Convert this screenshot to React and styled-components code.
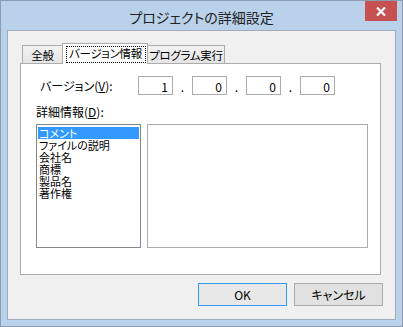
import React from 'react';
import styled, { createGlobalStyle } from 'styled-components';

const GlobalStyle = createGlobalStyle`
  html, body {
    margin: 0;
    padding: 0;
    background: #b9d1ea;
  }
  * {
    box-sizing: border-box;
  }
`;

const Window = styled.div`
  width: 403px;
  height: 327px;
  display: flex;
  flex-direction: column;
  background: #b9d1ea;
  border: 1px solid #8a9db2;
  font-family: 'Noto Sans CJK JP', 'Noto Sans', sans-serif;
  font-feature-settings: 'palt';
  color: #000;
`;

const TitleBar = styled.div`
  height: 29px;
  display: grid;
  grid-template-columns: 1fr auto 1fr;
`;

const Title = styled.div`
  grid-column: 2;
  align-self: center;
  padding-top: 2px;
  font-size: 14px;
  line-height: 16px;
  color: #222;
  white-space: nowrap;
`;

const CloseButton = styled.button`
  grid-column: 3;
  justify-self: end;
  align-self: start;
  width: 32px;
  height: 20px;
  margin-right: 5px;
  padding: 0;
  border: none;
  background: #c75050;
  display: flex;
  align-items: center;
  justify-content: center;
`;

const Client = styled.div`
  flex: 1;
  margin: 0 6px 6px;
  border: 1px solid #a2adb9;
  background: #f0f0f0;
  padding: 12px 12px 13px 12px;
  display: flex;
  flex-direction: column;
`;

const TabStrip = styled.div`
  height: 20px;
  display: flex;
  align-items: flex-end;
  padding-left: 2px;
  margin-right: 2px;
`;

const Tab = styled.div`
  position: relative;
  height: ${({ $active }) => ($active ? '21px' : '18px')};
  width: ${({ $w }) => $w}px;
  flex-shrink: 0;
  margin-left: ${({ $first }) => ($first ? '0' : '-1px')};
  margin-bottom: ${({ $active }) => ($active ? '-1px' : '0')};
  z-index: ${({ $active }) => ($active ? 2 : 1)};
  border: 1px solid #acacac;
  border-bottom: none;
  background: ${({ $active }) =>
    $active ? '#fff' : 'linear-gradient(#f2f2f2, #e5e5e5)'};
  font-size: 11.5px;
  letter-spacing: -0.3px;
  line-height: 14px;
  white-space: nowrap;
  display: flex;
  align-items: flex-start;
  justify-content: center;
  padding-top: 2px;
`;

const FocusLabel = styled.span`
  display: block;
  height: 17px;
  line-height: 15px;
  width: 80px;
  margin-left: 1px;
  text-align: center;
  outline: 1px dotted #000;
  outline-offset: -1px;
`;

const Panel = styled.div`
  flex: 1;
  margin-right: 2px;
  background: #fff;
  border: 1px solid #acacac;
  padding: 12px 12px 0 15px;
  display: flex;
  flex-direction: column;
`;

const VersionRow = styled.div`
  display: flex;
  align-items: center;
  height: 19px;
`;

const VersionLabel = styled.label`
  width: 102px;
  padding-left: 4px;
  font-size: 12px;
  line-height: 14px;
  padding-top: 1px;
  white-space: nowrap;
`;

const NumberBox = styled.div`
  width: 35px;
  height: 19px;
  border: 1px solid #acacac;
  background: #fff;
  font-size: 12px;
  line-height: 17px;
  text-align: right;
  padding-right: 4px;
  padding-top: 1px;
`;

const Dot = styled.span`
  width: 19px;
  text-align: center;
  font-size: 12px;
  line-height: 17px;
  padding-top: 2px;
`;

const DetailLabel = styled.div`
  margin-top: 11px;
  font-size: 12px;
  line-height: 12px;
  height: 12px;
  white-space: nowrap;
`;

const Lists = styled.div`
  margin-top: 6px;
  display: flex;
  gap: 6px;
  height: 124px;
`;

const ListBox = styled.div`
  width: 105px;
  border: 1px solid #828790;
  background: #fff;
  padding: 2px 1px;
`;

const ListItem = styled.div`
  line-height: 12px;
  font-size: 11px;
  padding-left: 1px;
  white-space: nowrap;
  background: ${({ $selected }) => ($selected ? '#3399ff' : 'transparent')};
  color: ${({ $selected }) => ($selected ? '#fff' : '#000')};
`;

const ValueBox = styled.div`
  width: 221px;
  border: 1px solid #acacac;
  background: #fff;
`;

const ButtonRow = styled.div`
  margin-top: 8px;
  display: flex;
  justify-content: flex-end;
  gap: 7px;
`;

const Button = styled.button`
  width: 89px;
  height: 23px;
  padding: 0;
  font-family: inherit;
  font-feature-settings: 'palt';
  font-size: 12px;
  color: #000;
  border: 1px solid ${({ $default }) => ($default ? '#3399ff' : '#adadad')};
  background: ${({ $default }) => ($default ? '#e8e8e8' : '#e1e1e1')};
`;

const items = ['コメント', 'ファイルの説明', '会社名', '商標', '製品名', '著作権'];
const version = [1, 0, 0, 0];

export default function App() {
  return (
    <>
      <GlobalStyle />
      <Window>
        <TitleBar>
          <Title>プロジェクトの詳細設定</Title>
          <CloseButton aria-label="閉じる">
            <svg width="10" height="9" viewBox="0 0 10 9">
              <path d="M1 0.5 L9 8.5 M9 0.5 L1 8.5" stroke="#fff" strokeWidth="2.2" />
            </svg>
          </CloseButton>
        </TitleBar>
        <Client>
          <TabStrip>
            <Tab $first $w={41}>全般</Tab>
            <Tab $active $w={86}>
              <FocusLabel>バージョン情報</FocusLabel>
            </Tab>
            <Tab $w={78}>プログラム実行</Tab>
          </TabStrip>
          <Panel>
            <VersionRow>
              <VersionLabel>
                バージョン(<u>V</u>):
              </VersionLabel>
              {version.map((v, i) => (
                <React.Fragment key={i}>
                  {i > 0 && <Dot>.</Dot>}
                  <NumberBox>{v}</NumberBox>
                </React.Fragment>
              ))}
            </VersionRow>
            <DetailLabel>
              詳細情報(<u>D</u>):
            </DetailLabel>
            <Lists>
              <ListBox>
                {items.map((it, i) => (
                  <ListItem key={it} $selected={i === 0}>
                    {it}
                  </ListItem>
                ))}
              </ListBox>
              <ValueBox />
            </Lists>
          </Panel>
          <ButtonRow>
            <Button $default>OK</Button>
            <Button>キャンセル</Button>
          </ButtonRow>
        </Client>
      </Window>
    </>
  );
}
